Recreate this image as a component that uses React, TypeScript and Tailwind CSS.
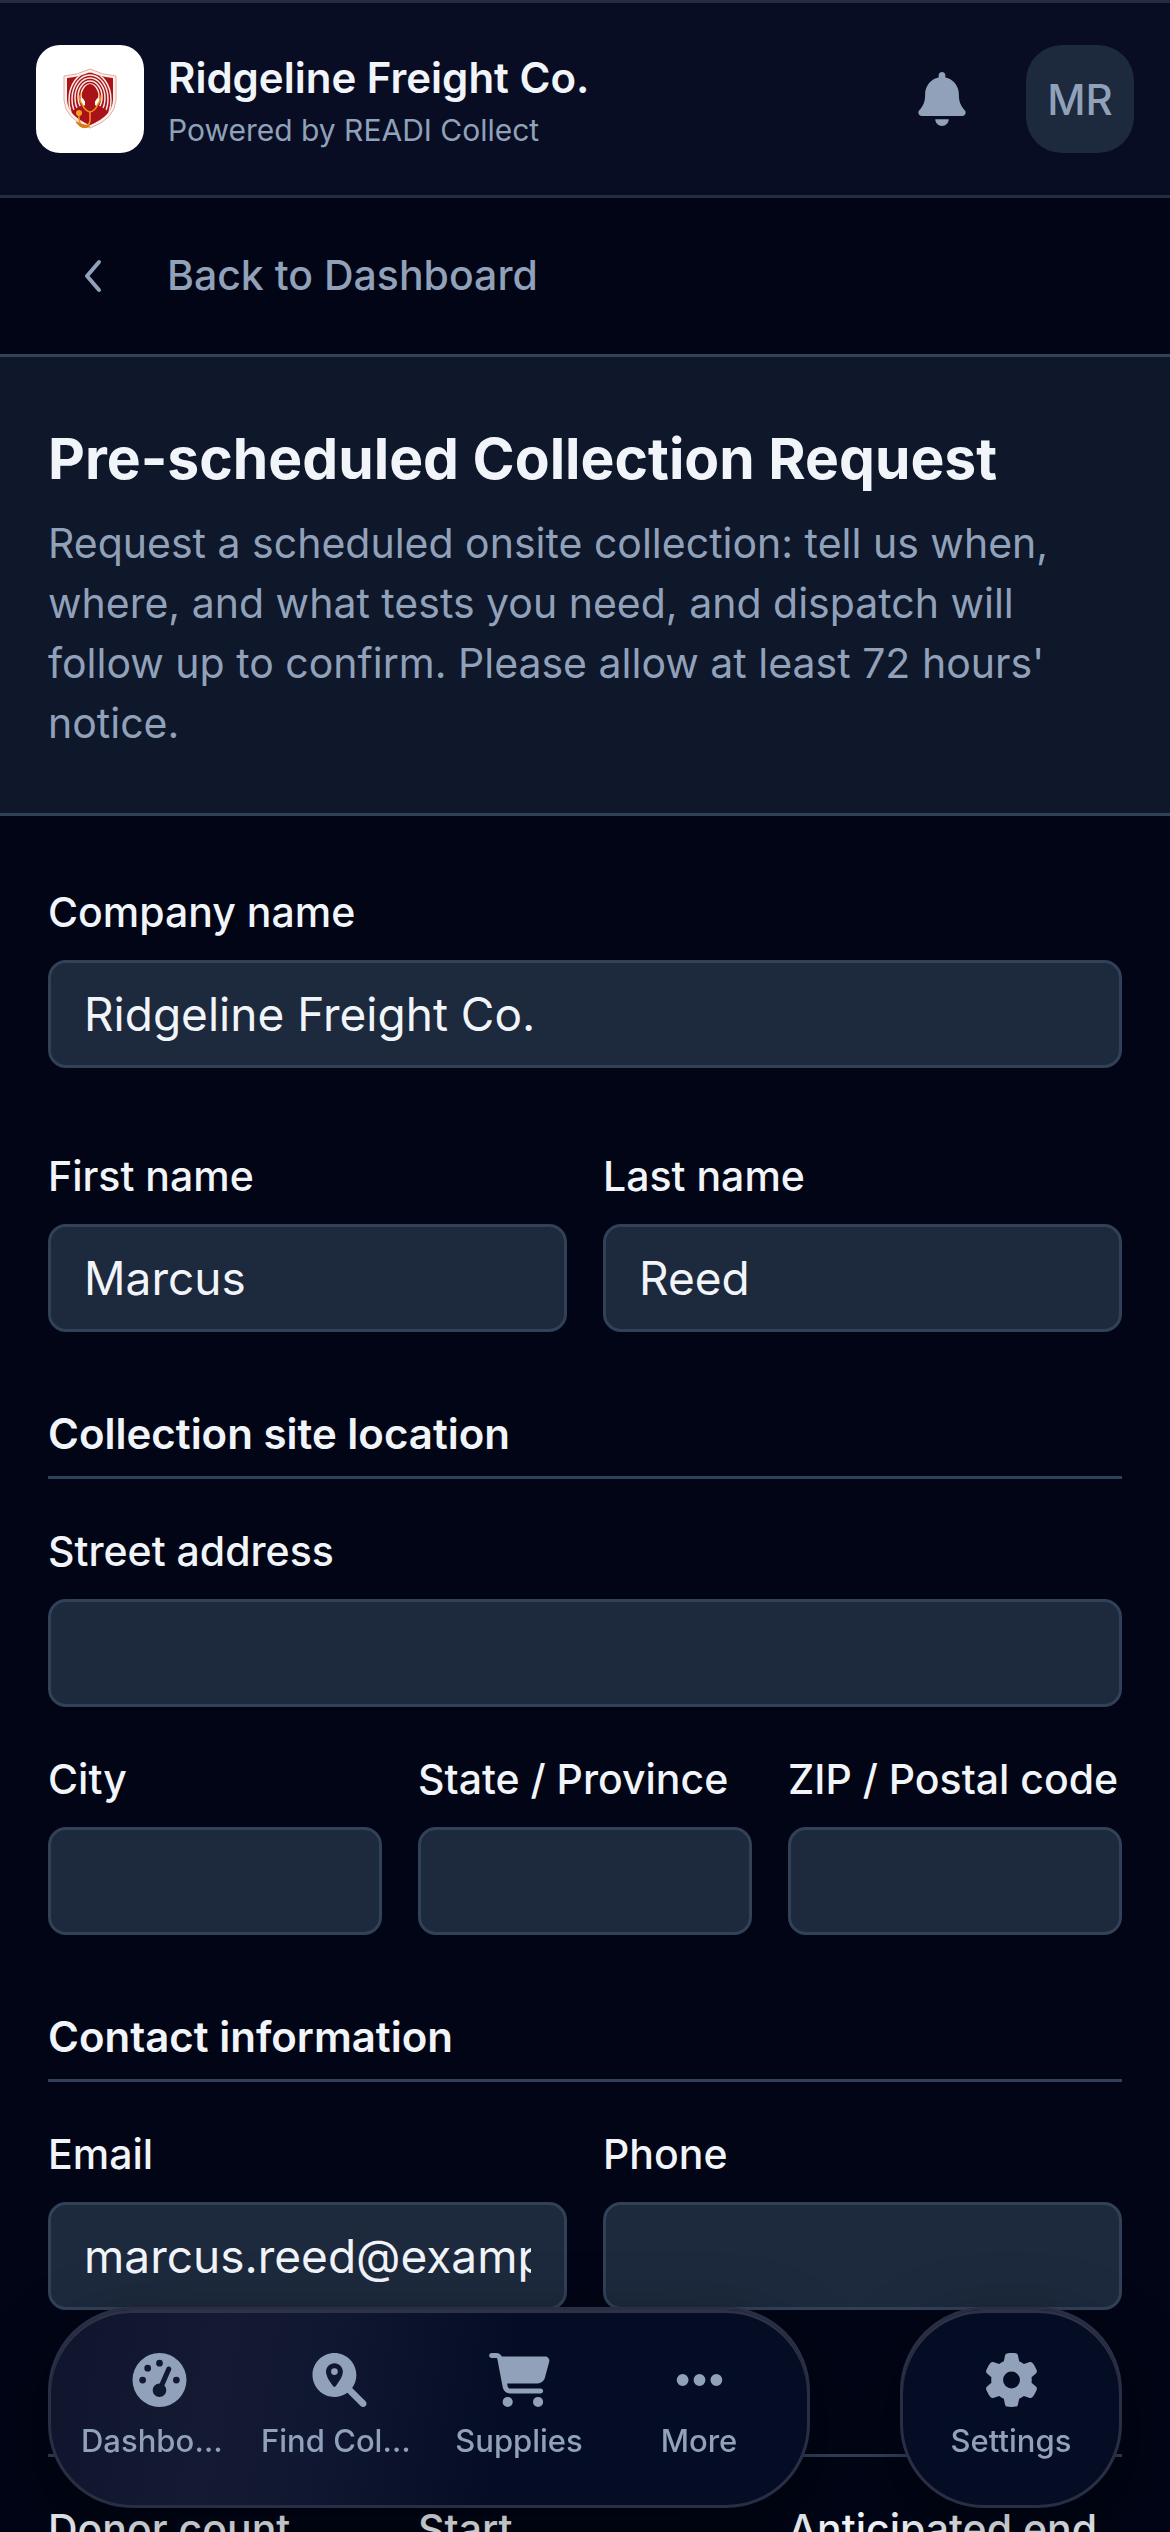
import type { ReactNode } from 'react';
import {
  FaBell,
  FaCartShopping,
  FaEllipsis,
  FaGaugeHigh,
  FaGear,
  FaMagnifyingGlassLocation,
} from 'react-icons/fa6';

function ShieldLogo() {
  return (
    <svg viewBox="0 0 54 62" className="h-[62px] w-[54px]" aria-hidden="true">
      <defs>
        <clipPath id="shield">
          <path d="M27 4 Q38 9 50 10 V32 Q49 48 27 57 Q5 48 4 32 V10 Q16 9 27 4Z" />
        </clipPath>
      </defs>
      <path
        d="M27 1 Q39 7 53 8 V32 Q52 51 27 60 Q2 51 1 32 V8 Q15 7 27 1Z"
        fill="#fdf1ec"
        stroke="#e3aaa2"
        strokeWidth="1"
      />
      <g clipPath="url(#shield)">
        <rect width="54" height="62" fill="#a81218" />
        <g fill="none" stroke="#fbe9e4" strokeWidth="1.5">
          <ellipse cx="27" cy="28" rx="9" ry="12" />
          <ellipse cx="27" cy="29" rx="12" ry="16" />
          <ellipse cx="27" cy="30" rx="15" ry="20" />
          <ellipse cx="27" cy="31" rx="18" ry="24" />
          <ellipse cx="27" cy="32" rx="21" ry="28" />
        </g>
        <path d="M5 50 Q8 41 20 37 H34 Q46 41 49 50 V62 H5Z" fill="#a81218" />
        <path d="M18 31 L22 37 M36 31 L32 37" stroke="#fff" strokeWidth="4" />
        <ellipse cx="27" cy="26" rx="7" ry="10" fill="#a81218" />
        <path d="M22 30 H32 V42 H22Z" fill="#a81218" />
      </g>
      <g fill="none" stroke="#f0931a" strokeWidth="1.6" strokeLinecap="round">
        <path d="M18 26 Q15 31 19 36 Q22 43 27 44 Q32 43 35 36 Q39 31 36 26" />
        <path d="M27 44 V53 Q26 59 20 58 Q15 56 16 45" />
      </g>
      <path d="M13 54 Q18 57 27 58 Q19 63 13 54Z" fill="#d97b14" stroke="#d97b14" />
      <circle cx="16" cy="45" r="3" fill="#f5a11f" />
    </svg>
  );
}

type FieldProps = {
  id: string;
  label: string;
  type?: string;
  value?: string;
};

function Field({ id, label, type = 'text', value = '' }: FieldProps) {
  return (
    <div className="flex min-w-0 flex-col gap-[18px]">
      <label htmlFor={id} className="text-[41px] leading-[60px] font-medium whitespace-nowrap">
        {label}
      </label>
      <input
        id={id}
        type={type}
        defaultValue={value}
        className="h-[108px] w-full rounded-[18px] border-3 border-slate-700 bg-slate-800 px-[33px] text-[46px]"
      />
    </div>
  );
}

function Section({ title, children }: { title?: string; children: ReactNode }) {
  return (
    <section className="mt-[72px] flex flex-col gap-[42px]">
      <div className="h-[75px] border-b-3 border-slate-700">
        {title && <h2 className="text-[42px] leading-[60px] font-semibold">{title}</h2>}
      </div>
      {children}
    </section>
  );
}

const tabs = [
  { label: 'Dashboard', icon: FaGaugeHigh },
  { label: 'Find Collector', icon: FaMagnifyingGlassLocation },
  { label: 'Supplies', icon: FaCartShopping },
  { label: 'More', icon: FaEllipsis },
];

const pill =
  'rounded-[84px] border-3 border-[#292e45] bg-[#050d24] shadow-[0_24px_72px_rgba(0,0,0,0.35),inset_0_3px_0_#2e3248]';

export default function App() {
  return (
    <div className="flex h-screen flex-col overflow-hidden bg-[#010515] font-[Inter,sans-serif] text-slate-100">
      <header className="flex shrink-0 items-center border-y-3 border-[#252b42] bg-[#080d24] px-9 py-[42px]">
        <div className="flex size-[108px] items-center justify-center rounded-3xl bg-white">
          <ShieldLogo />
        </div>
        <div className="ml-6 flex-1">
          <div className="text-[42px] leading-[62px] font-semibold">Ridgeline Freight Co.</div>
          <div className="text-[30px] leading-[42px] text-slate-400">Powered by READI Collect</div>
        </div>
        <button aria-label="Notifications" className="mr-[60px] text-slate-400">
          <FaBell className="h-[54px] w-12" />
        </button>
        <button className="size-[108px] rounded-[36px] bg-slate-800 text-[42px] font-medium text-slate-400">
          MR
        </button>
      </header>

      <a
        href="#dashboard"
        className="flex h-[159px] shrink-0 items-center border-b-3 border-slate-700 pl-[84px] text-[41px] font-medium text-slate-400"
      >
        <svg viewBox="0 0 18 36" fill="none" className="mr-[65px] h-9 w-[18px]" aria-hidden="true">
          <path d="M15 4 L3 18 L15 32" stroke="currentColor" strokeWidth="4" strokeLinecap="round" strokeLinejoin="round" />
        </svg>
        Back to Dashboard
      </a>

      <main className="flex-1 overflow-y-auto [scrollbar-width:none]">
        {/* Page intro */}
        <div className="border-b-3 border-slate-700 bg-slate-900 px-12 py-[60px]">
          <h1 className="mb-3 text-[57px] leading-[84px] font-bold">Pre-scheduled Collection Request</h1>
          <p className="text-[41px] leading-[60px] text-slate-400">
            Request a scheduled onsite collection: tell us when, where, and what tests you need, and dispatch will
            follow up to confirm. Please allow at least 72 hours' notice.
          </p>
        </div>

        <form className="px-12 pt-[66px] pb-[300px]">
          <div className="flex flex-col gap-[78px]">
            <Field id="company" label="Company name" value="Ridgeline Freight Co." />
            <div className="grid grid-cols-2 gap-9">
              <Field id="first" label="First name" value="Marcus" />
              <Field id="last" label="Last name" value="Reed" />
            </div>
          </div>

          <Section title="Collection site location">
            <Field id="street" label="Street address" />
            <div className="grid grid-cols-3 gap-9">
              <Field id="city" label="City" />
              <Field id="state" label="State / Province" />
              <Field id="zip" label="ZIP / Postal code" />
            </div>
          </Section>

          <Section title="Contact information">
            <div className="grid grid-cols-2 gap-9">
              <Field id="email" label="Email" type="email" value="marcus.reed@example.com" />
              <Field id="phone" label="Phone" type="tel" />
            </div>
          </Section>

          <Section>
            <div className="grid grid-cols-3 gap-9">
              <Field id="donors" label="Donor count" />
              <Field id="start" label="Start" />
              <Field id="end" label="Anticipated end" />
            </div>
          </Section>
        </form>
      </main>

      {/* Floating tab bar */}
      <nav className="fixed inset-x-12 bottom-6 flex h-[201px] justify-between text-[31px] leading-9 font-medium text-slate-400">
        <div
          className={`flex w-[762px] bg-[linear-gradient(100deg,#0e152d,#131a31_22%,#101730_36%,#050d24_60%)] px-[18px] ${pill}`}
        >
          {tabs.map(({ label, icon: Icon }) => (
            <button key={label} className="flex w-[180px] flex-col items-center justify-center gap-4 px-3 pb-1">
              <Icon className="h-[54px] w-[61px]" />
              <span className="w-full truncate text-center">{label}</span>
            </button>
          ))}
        </div>
        <button className={`flex w-[222px] flex-col items-center justify-center gap-4 pb-1 ${pill}`}>
          <FaGear className="h-[54px] w-[61px]" />
          Settings
        </button>
      </nav>
    </div>
  );
}
